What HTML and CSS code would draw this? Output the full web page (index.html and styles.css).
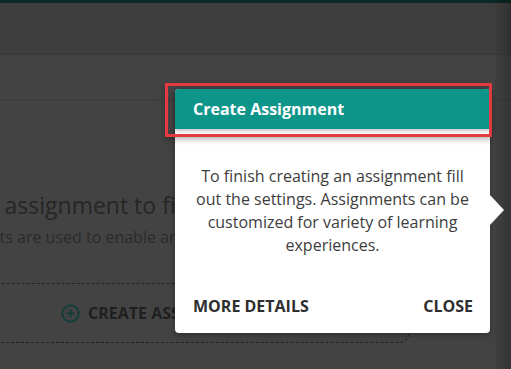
FILE: index.html
```html
<!DOCTYPE html>
<html lang="en">
<head>
    <meta charset="UTF-8">
    <meta name="viewport" content="width=device-width, initial-scale=1.0">
    <title>Create Assignment</title>
    <link rel="stylesheet" href="styles.css">
</head>
<body>

<div class="page">
    <div class="topbar"></div>
    <div class="header-band"></div>
    <div class="toolbar"></div>

    <div class="content">
        <h1 class="empty-title">Create an assignment to finish setup</h1>
        <p class="empty-sub">Assignments are used to enable and track learning</p>
        <div class="drop-box">
            <span class="create-btn">
                <svg class="plus" width="19" height="19" viewBox="0 0 19 19">
                    <circle cx="9.5" cy="9.5" r="8.2" fill="none" stroke="#0f3e38" stroke-width="1.7"/>
                    <path d="M9.5 5.2v8.6M5.2 9.5h8.6" stroke="#0f3e38" stroke-width="1.7"/>
                </svg>
                CREATE ASSIGNMENT
            </span>
        </div>
    </div>

    <div class="scroll-shade"></div>

    <!-- walkthrough popup -->
    <div class="popup">
        <div class="popup-head">Create Assignment</div>
        <p class="popup-text">To finish creating an assignment fill out the settings. Assignments can be customized for variety of learning experiences.</p>
        <div class="popup-actions">
            <span>MORE DETAILS</span>
            <span>CLOSE</span>
        </div>
        <div class="popup-arrow"></div>
    </div>
    <div class="highlight"></div>
</div>

</body>
</html>
```

FILE: styles.css
```css
body {
    margin: 0;
    font-family: "Open Sans", "Liberation Sans", sans-serif;
    background-color: #424242;
}
.page {
    position: relative;
    width: 511px;
    height: 369px;
    overflow: hidden;
    background-color: #434343;
}
.topbar {
    height: 3px;
    background-color: #0c2824;
}
.header-band {
    height: 51px;
    background-color: #3e3e3e;
    border-bottom: 1px solid #393939;
}
.toolbar {
    height: 45px;
    border-bottom: 1px solid #3b3b3b;
}
.content {
    padding-top: 88px;
}
.empty-title {
    margin: 0 0 0 -105px;
    font-size: 23px;
    font-weight: 400;
    color: #262626;
    line-height: 32px;
    white-space: nowrap;
}
.empty-sub {
    margin: 5px 0 0 -82px;
    font-size: 16px;
    color: #2b2b2b;
    line-height: 22px;
    white-space: nowrap;
}
.drop-box {
    width: 590px;
    height: 60px;
    margin: 35px 0 0 -180px;
    border: 1px dashed #222;
    border-radius: 12px;
    display: flex;
    align-items: center;
    padding-left: 240px;
    box-sizing: border-box;
}
.create-btn {
    display: flex;
    align-items: center;
    gap: 8px;
    font-size: 16px;
    font-weight: 700;
    color: #1f1f1f;
    white-space: nowrap;
}
.scroll-shade {
    position: absolute;
    top: 0;
    right: 0;
    width: 16px;
    height: 100%;
    background: linear-gradient(to right, rgba(0,0,0,0.04), rgba(0,0,0,0.22));
}
.popup {
    position: absolute;
    left: 175px;
    top: 89px;
    width: 315px;
    height: 244px;
    background-color: #fff;
    border-radius: 4px;
    box-shadow: 0 2px 6px rgba(0,0,0,0.3);
    display: flex;
    flex-direction: column;
}
.popup-head {
    height: 40px;
    line-height: 40px;
    padding-left: 18px;
    background-color: #0e958a;
    color: #fff;
    font-size: 16px;
    font-weight: 700;
    border-radius: 4px 4px 0 0;
    box-shadow: 0 2px 4px rgba(0,0,0,0.25);
}
.popup-text {
    margin: 36px 16px 0 16px;
    text-align: center;
    font-size: 16px;
    line-height: 23px;
    color: #3d3d3d;
}
.popup-actions {
    margin-top: auto;
    padding: 0 17px 16px 18px;
    display: flex;
    justify-content: space-between;
    font-size: 16px;
    line-height: 22px;
    font-weight: 700;
    color: #2e2e2e;
}
.popup-arrow {
    position: absolute;
    right: -14px;
    top: 106px;
    width: 0;
    height: 0;
    border-top: 15px solid transparent;
    border-bottom: 15px solid transparent;
    border-left: 14px solid #fff;
}
.highlight {
    position: absolute;
    left: 165px;
    top: 83px;
    width: 327px;
    height: 54px;
    box-sizing: border-box;
    border: 3px solid #e23a3e;
    box-shadow: 0 3px 5px rgba(0,0,0,0.25);
}
```
